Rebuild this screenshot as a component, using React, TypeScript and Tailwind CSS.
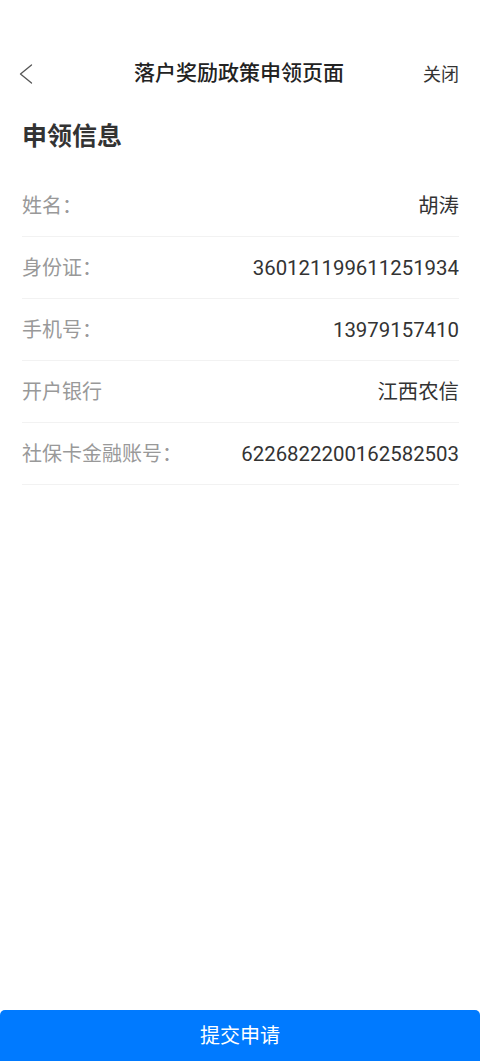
interface Field {
  label: string
  value: string
}

const FIELDS: Field[] = [
  { label: "姓名：", value: "胡涛" },
  { label: "身份证：", value: "360121199611251934" },
  { label: "手机号：", value: "13979157410" },
  { label: "开户银行", value: "江西农信" },
  { label: "社保卡金融账号：", value: "6226822200162582503" },
]

export default function App() {
  return (
    <div
      className="flex h-[1061px] w-full flex-col bg-white"
      style={{ fontFamily: 'Roboto, "Noto Sans CJK SC", sans-serif' }}
    >
      {/* top bar */}
      <div className="mt-[48px] flex h-[52px] items-center justify-between pr-[21px] pl-[19px]">
        <button className="flex w-[60px] items-center text-[#555]">
          <svg width="14" height="20" viewBox="0 0 14 20" fill="none">
            <polyline
              points="12.5,1 1.5,10 12.5,19"
              stroke="currentColor"
              strokeWidth="1.3"
              strokeLinecap="round"
              strokeLinejoin="round"
            />
          </svg>
        </button>
        <h1 className="text-[21px] font-medium text-[#222]">落户奖励政策申领页面</h1>
        <button className="w-[60px] text-right text-[18px] text-[#333]">关闭</button>
      </div>

      <h2 className="mt-[19px] px-[22px] text-[25px] leading-[36px] font-bold text-[#333]">
        申领信息
      </h2>

      <div className="mt-[20px] pr-[21px] pl-[22px]">
        {FIELDS.map((f) => (
          <div
            key={f.label}
            className="flex h-[62px] items-center justify-between border-b border-[#f2f2f2] pt-[1px]"
          >
            <span className="text-[20px] text-[#999]">{f.label}</span>
            <span className="text-[20.4px] text-[#333]">{f.value}</span>
          </div>
        ))}
      </div>

      <button className="mt-auto flex h-[51px] w-full items-center justify-center rounded-t-[5px] bg-[#007aff] text-[20px] text-white">
        提交申请
      </button>
    </div>
  )
}
